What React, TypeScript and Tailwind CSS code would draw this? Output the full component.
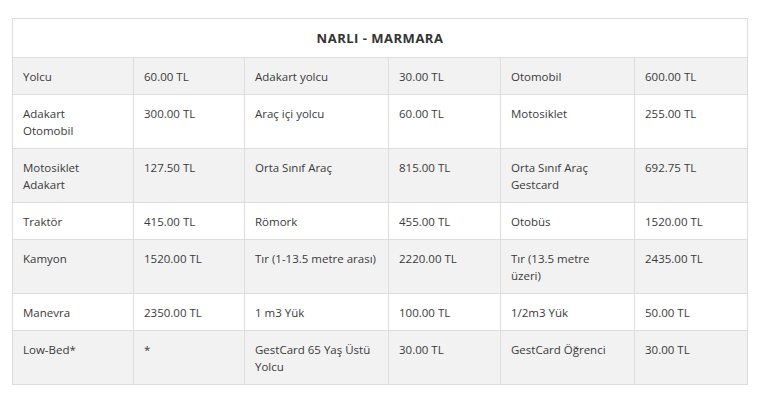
const rows: string[][][] = [
  [["Yolcu"], ["60.00 TL"], ["Adakart yolcu"], ["30.00 TL"], ["Otomobil"], ["600.00 TL"]],
  [["Adakart", "Otomobil"], ["300.00 TL"], ["Araç içi yolcu"], ["60.00 TL"], ["Motosiklet"], ["255.00 TL"]],
  [["Motosiklet", "Adakart"], ["127.50 TL"], ["Orta Sınıf Araç"], ["815.00 TL"], ["Orta Sınıf Araç", "Gestcard"], ["692.75 TL"]],
  [["Traktör"], ["415.00 TL"], ["Römork"], ["455.00 TL"], ["Otobüs"], ["1520.00 TL"]],
  [["Kamyon"], ["1520.00 TL"], ["Tır (1-13.5 metre arası)"], ["2220.00 TL"], ["Tır (13.5 metre", "üzeri)"], ["2435.00 TL"]],
  [["Manevra"], ["2350.00 TL"], ["1 m3 Yük"], ["100.00 TL"], ["1/2m3 Yük"], ["50.00 TL"]],
  [["Low-Bed*"], ["*"], ["GestCard 65 Yaş Üstü", "Yolcu"], ["30.00 TL"], ["GestCard Öğrenci"], ["30.00 TL"]],
];

const widths = ["w-[121px]", "w-[111px]", "w-[144px]", "w-[112px]", "w-[134px]", "w-[113px]"];

export default function App() {
  return (
    <div className="w-[777px] h-[402px] bg-white pt-[18px] pl-[12px] font-['Open_Sans',sans-serif] text-[#3a3a3a]">
      <table className="w-[735px] table-fixed border-collapse border border-[#dddddd] text-[11.5px] leading-[17px]">
        <colgroup>
          {widths.map((w, i) => (
            <col key={i} className={w} />
          ))}
        </colgroup>
        <thead>
          <tr className="h-[39px] bg-white">
            <th colSpan={6} className="border border-[#dddddd] text-center text-[13px] font-bold tracking-[0.5px] text-[#333]">
              NARLI - MARMARA
            </th>
          </tr>
        </thead>
        <tbody>
          {rows.map((row, r) => (
            <tr key={r} className={r % 2 === 0 ? "bg-[#f2f2f2]" : "bg-white"}>
              {row.map((cell, c) => (
                <td
                  key={c}
                  className="border border-[#dddddd] px-[10px] pt-[10px] pb-[9px] align-top whitespace-nowrap"
                >
                  {cell.map((line, i) => (
                    <div key={i}>{line}</div>
                  ))}
                </td>
              ))}
            </tr>
          ))}
        </tbody>
      </table>
    </div>
  );
}
